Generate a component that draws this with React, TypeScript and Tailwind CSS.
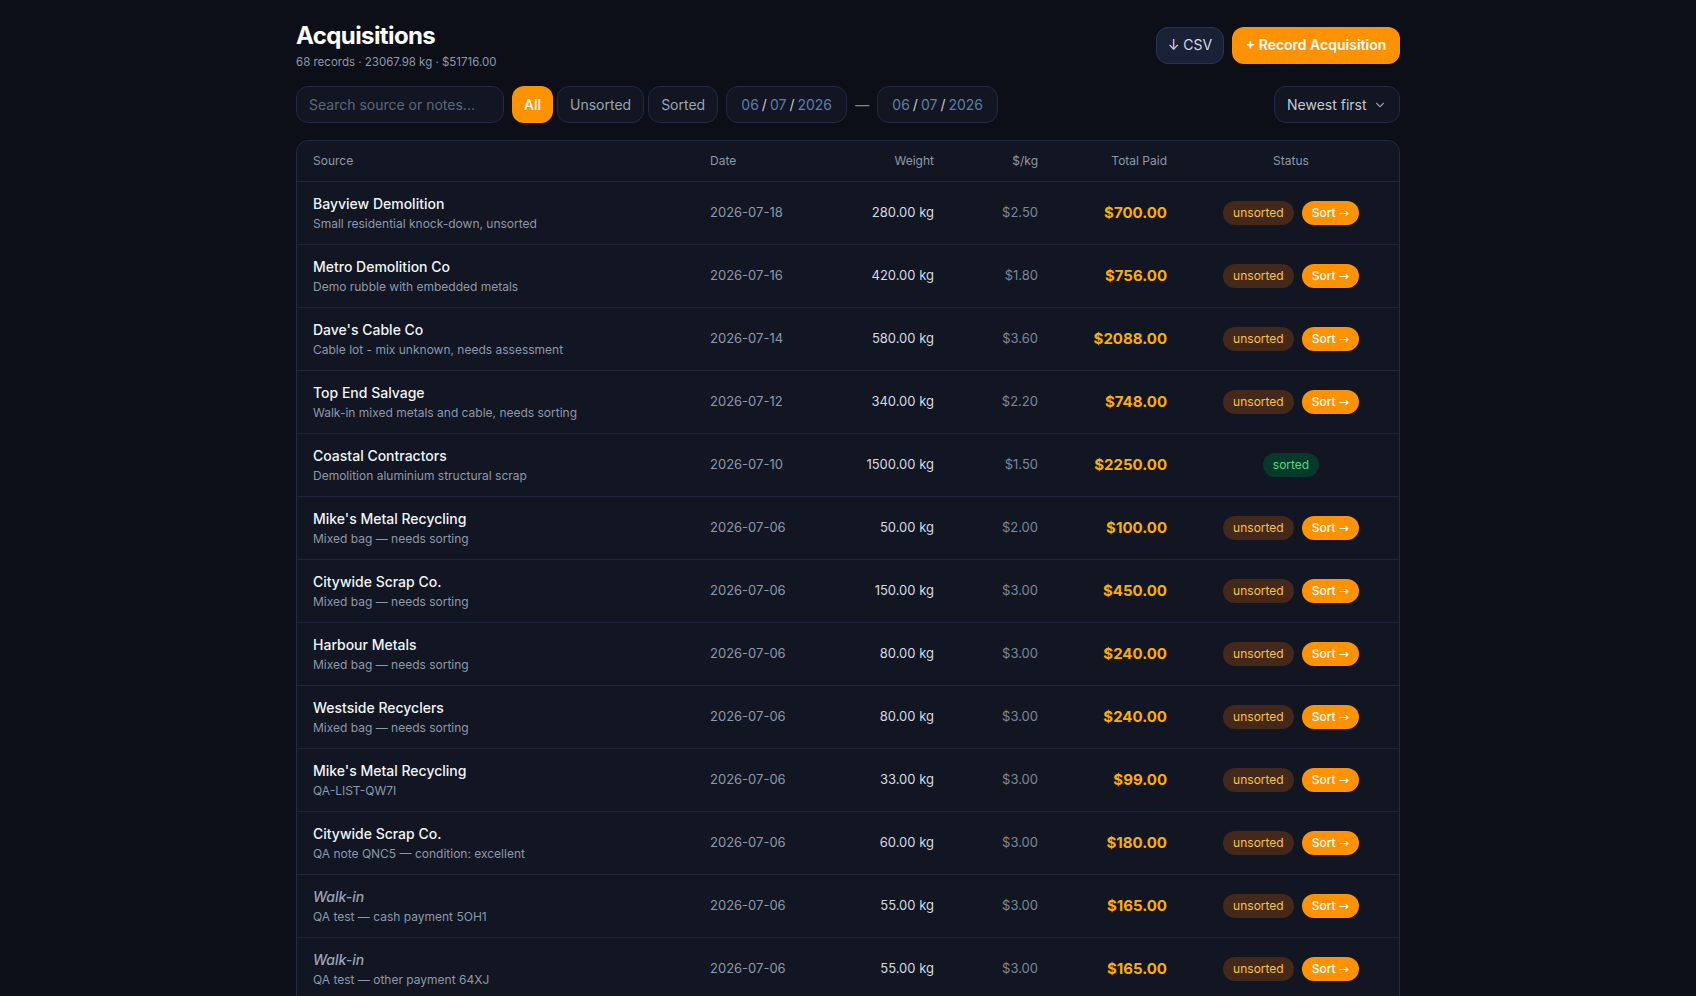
import { ChevronDown } from 'lucide-react';
import { clsx } from 'clsx';

type Row = {
  source: string;
  note: string;
  date: string;
  weight: string;
  rate: string;
  total: string;
  sorted?: boolean;
  walkIn?: boolean;
};

const ROWS: Row[] = [
  { source: 'Bayview Demolition', note: 'Small residential knock-down, unsorted', date: '2026-07-18', weight: '280.00', rate: '2.50', total: '700.00' },
  { source: 'Metro Demolition Co', note: 'Demo rubble with embedded metals', date: '2026-07-16', weight: '420.00', rate: '1.80', total: '756.00' },
  { source: "Dave's Cable Co", note: 'Cable lot - mix unknown, needs assessment', date: '2026-07-14', weight: '580.00', rate: '3.60', total: '2088.00' },
  { source: 'Top End Salvage', note: 'Walk-in mixed metals and cable, needs sorting', date: '2026-07-12', weight: '340.00', rate: '2.20', total: '748.00' },
  { source: 'Coastal Contractors', note: 'Demolition aluminium structural scrap', date: '2026-07-10', weight: '1500.00', rate: '1.50', total: '2250.00', sorted: true },
  { source: "Mike's Metal Recycling", note: 'Mixed bag — needs sorting', date: '2026-07-06', weight: '50.00', rate: '2.00', total: '100.00' },
  { source: 'Citywide Scrap Co.', note: 'Mixed bag — needs sorting', date: '2026-07-06', weight: '150.00', rate: '3.00', total: '450.00' },
  { source: 'Harbour Metals', note: 'Mixed bag — needs sorting', date: '2026-07-06', weight: '80.00', rate: '3.00', total: '240.00' },
  { source: 'Westside Recyclers', note: 'Mixed bag — needs sorting', date: '2026-07-06', weight: '80.00', rate: '3.00', total: '240.00' },
  { source: "Mike's Metal Recycling", note: 'QA-LIST-QW7I', date: '2026-07-06', weight: '33.00', rate: '3.00', total: '99.00' },
  { source: 'Citywide Scrap Co.', note: 'QA note QNC5 — condition: excellent', date: '2026-07-06', weight: '60.00', rate: '3.00', total: '180.00' },
  { source: 'Walk-in', note: 'QA test — cash payment 5OH1', date: '2026-07-06', weight: '55.00', rate: '3.00', total: '165.00', walkIn: true },
  { source: 'Walk-in', note: 'QA test — other payment 64XJ', date: '2026-07-06', weight: '55.00', rate: '3.00', total: '165.00', walkIn: true },
  { source: 'Harbour Metals', note: 'Mixed bag — needs sorting', date: '2026-07-05', weight: '120.00', rate: '2.80', total: '336.00' },
];

// shared grid so header and rows line up
const COLS = 'grid grid-cols-[397px_127px_129px_104px_129px_1fr] items-center';

function DateBox() {
  return (
    <div className="h-[37px] w-[121px] flex items-center justify-center rounded-xl border border-[#232a42] bg-[#111622] text-sm text-[#5f7ea8]">
      <span>06</span>
      <span className="mx-[3px] text-[#c3cad6]">/</span>
      <span>07</span>
      <span className="mx-[3px] text-[#c3cad6]">/</span>
      <span>2026</span>
    </div>
  );
}

export default function App() {
  return (
    <div className="min-h-screen bg-[#0c0f17] text-white font-['Inter',sans-serif]">
      <div className="max-w-6xl mx-auto px-6 pt-5 pb-10">
        {/* Header */}
        <div className="flex items-center justify-between">
          <div>
            <h1 className="text-2xl leading-8 font-bold tracking-tight text-white">Acquisitions</h1>
            <p className="mt-0.5 text-[11.5px] leading-4 text-[#8e98aa]">68 records · 23067.98 kg · $51716.00</p>
          </div>
          <div className="flex items-center gap-2">
            <button className="h-[37px] w-[68px] rounded-xl border border-[#2b3350] bg-[#1a2035] text-sm text-[#d3d9e4]">
              ↓ CSV
            </button>
            <button className="h-[37px] w-[168px] rounded-xl bg-[#ff9200] text-sm font-semibold text-white">
              + Record Acquisition
            </button>
          </div>
        </div>

        {/* Filters */}
        <div className="mt-4 flex items-center">
          <div className="flex items-center gap-2">
            <div className="h-[37px] w-[208px] flex items-center rounded-xl border border-[#232a42] bg-[#111622] px-3 text-sm text-[#5d6779]">
              Search source or notes...
            </div>
            <div className="flex items-center gap-1">
              <button className="h-[37px] px-3 rounded-xl bg-[#ff9200] text-sm font-medium text-white">All</button>
              <button className="h-[37px] px-3 rounded-xl border border-[#232a42] bg-[#111622] text-sm text-[#9aa4b6]">Unsorted</button>
              <button className="h-[37px] px-3 rounded-xl border border-[#232a42] bg-[#111622] text-sm text-[#9aa4b6]">Sorted</button>
            </div>
            <DateBox />
            <span className="text-sm text-[#7d8699]">—</span>
            <DateBox />
          </div>
          <div className="ml-auto h-[37px] w-[126px] flex items-center justify-between rounded-xl border border-[#232a42] bg-[#111622] px-3 text-sm text-[#c3cad6]">
            <span>Newest first</span>
            <ChevronDown size={14} className="text-[#8e98aa]" />
          </div>
        </div>

        {/* Table */}
        <div className="mt-[17px] rounded-xl border border-[#232a42] bg-[#111622] overflow-hidden">
          <div className={clsx(COLS, 'h-10 text-xs text-[#8e98aa]')}>
            <div className="px-4">Source</div>
            <div className="px-4">Date</div>
            <div className="px-4 text-right">Weight</div>
            <div className="px-4 text-right">$/kg</div>
            <div className="px-4 text-right">Total Paid</div>
            <div className="px-4 text-center">Status</div>
          </div>
          {ROWS.map((r, i) => (
            <div key={i} className={clsx(COLS, 'border-t border-[#1f2538] py-3')}>
              <div className="px-4">
                <div
                  className={clsx(
                    'text-sm leading-5 font-medium',
                    r.walkIn ? 'italic text-[#9aa4b6]' : 'text-[#f1f4f8]'
                  )}
                >
                  {r.source}
                </div>
                <div className="mt-0.5 text-xs text-[#8e98aa]">{r.note}</div>
              </div>
              <div className="px-4 text-[13px] text-[#8e98aa]">{r.date}</div>
              <div className="px-4 text-right text-[13px] text-[#d5dae3]">{r.weight} kg</div>
              <div className="px-4 text-right text-[13px] text-[#7d879a]">${r.rate}</div>
              <div className="px-4 text-right text-[15px] font-bold text-[#fbb000]">${r.total}</div>
              <div className="px-4 flex items-center justify-center gap-2">
                {r.sorted ? (
                  <span className="rounded-full bg-[#06392a] px-2.5 py-1 text-xs text-[#4ade80]">sorted</span>
                ) : (
                  <>
                    <span className="rounded-full bg-[#44291a] px-2.5 py-1 text-xs text-[#f6c344]">unsorted</span>
                    <button className="rounded-full bg-[#ff9200] px-2.5 py-1 text-xs font-medium text-white">
                      Sort <span className="font-['DejaVu_Sans',sans-serif] font-normal">→</span>
                    </button>
                  </>
                )}
              </div>
            </div>
          ))}
        </div>
      </div>
    </div>
  );
}
